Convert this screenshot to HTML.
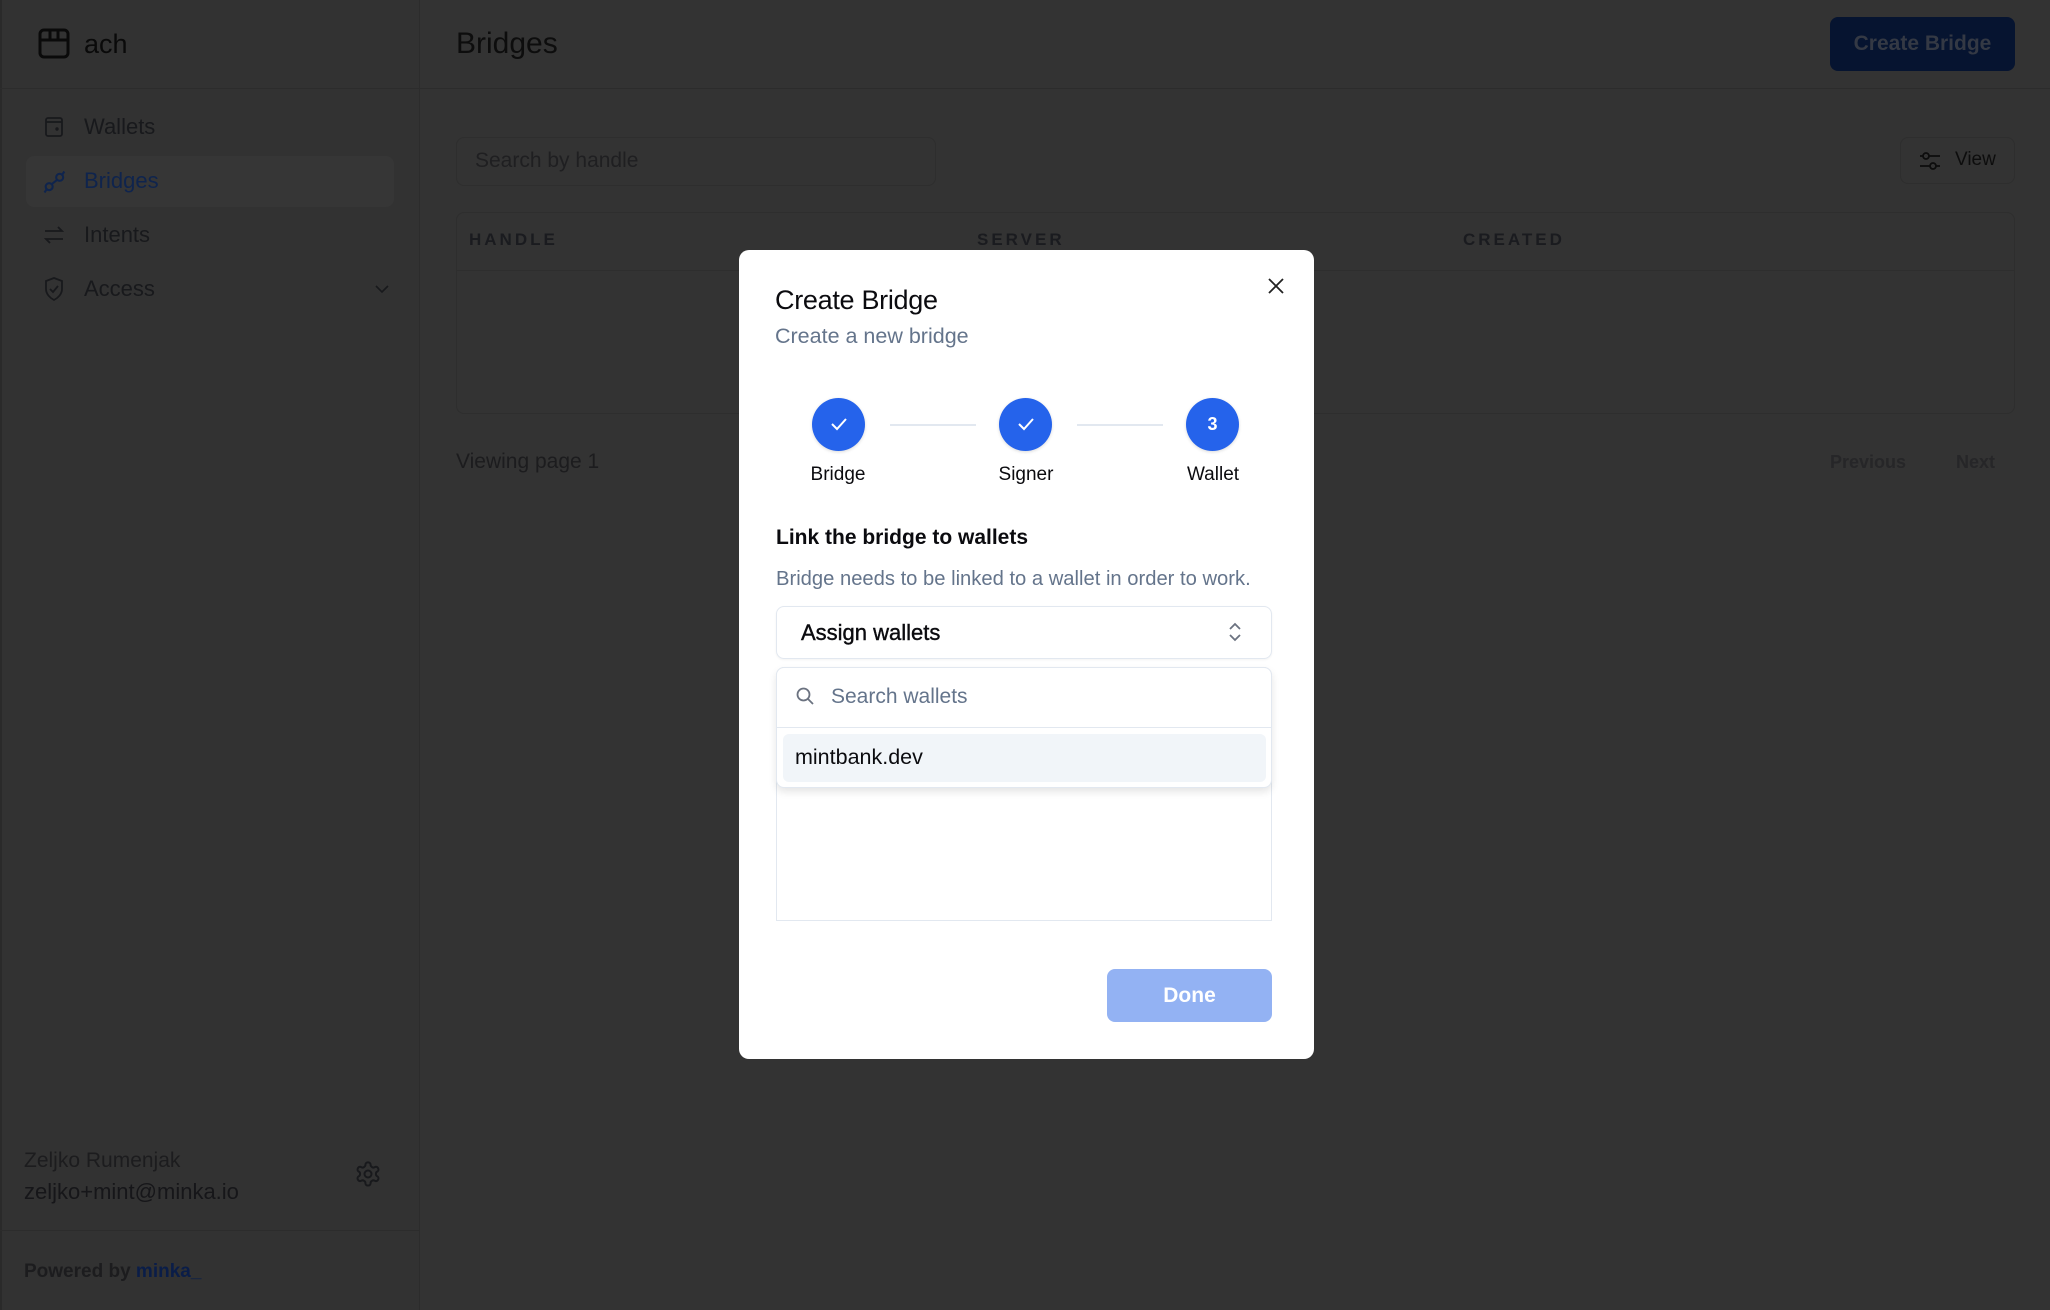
<!DOCTYPE html>
<html><head><meta charset="utf-8"><style>
*{box-sizing:border-box;margin:0;padding:0}
body{width:2050px;height:1310px;background:#333333;font-family:"Liberation Sans",sans-serif;position:relative;overflow:hidden;color:#1c1c1e}
.abs{position:absolute}
.sidebar{left:0;top:0;width:420px;height:1310px;background:#323232;border-right:1px solid #2c2c2c;border-left:2px solid #2a2a2a}
.hline{height:1px;background:#2c2c2c}
.nav{left:42px;font-size:22px;color:#18191c}
.t{white-space:nowrap}
</style></head><body>
<div class="abs sidebar"></div>
<div class="abs hline" style="left:0;top:88px;width:2050px"></div>
<div class="abs hline" style="left:0;top:1230px;width:420px"></div>
<svg class="abs" style="left:38px;top:27px" width="32" height="32" viewBox="0 0 32 32" fill="none" stroke="#0a0a0a" stroke-width="3"><rect x="2" y="3" width="28" height="27" rx="4"/><path d="M2 13h28M12 3v10M20 3v10"/></svg>
<div class="abs t" style="left:84px;top:29px;font-size:27px;color:#0a0a0a">ach</div>
<div class="abs t" style="left:456px;top:27px;font-size:30px;color:#0d0d0d">Bridges</div>
<div class="abs" style="left:1830px;top:17px;width:185px;height:54px;background:#061430;border-radius:8px;color:#343944;font-size:21px;font-weight:bold;text-align:center;line-height:54px">Create Bridge</div>
<div class="abs" style="left:26px;top:156px;width:368px;height:51px;background:#363636;border-radius:8px"></div>
<svg class="abs" style="left:43px;top:116px" width="22" height="22" viewBox="0 0 22 22" fill="none" stroke="#18191c" stroke-width="1.8"><rect x="3" y="2" width="16" height="18" rx="2"/><path d="M3 6h16"/><circle cx="14" cy="13" r="0.8"/></svg>
<div class="abs t nav" style="left:84px;top:114px">Wallets</div>
<svg class="abs" style="left:41px;top:168px" width="28" height="28" viewBox="0 0 24 24" fill="none" stroke="#0f244d" stroke-width="1.8"><circle cx="7" cy="16" r="3"/><circle cx="16" cy="8" r="3"/><path d="M3 21l2-3M20 3l-2 3M9 14l5-4"/></svg>
<div class="abs t nav" style="left:84px;top:168px;color:#0f244d">Bridges</div>
<svg class="abs" style="left:42px;top:223px" width="24" height="24" viewBox="0 0 24 24" fill="none" stroke="#18191c" stroke-width="1.8"><path d="M3 8h17l-4-4M21 16H4l4 4"/></svg>
<div class="abs t nav" style="left:84px;top:222px">Intents</div>
<svg class="abs" style="left:43px;top:276px" width="22" height="26" viewBox="0 0 22 26" fill="none" stroke="#18191c" stroke-width="1.8"><path d="M11 2l8 3v8c0 5-4 9-8 11C7 22 3 18 3 13V5z"/><path d="M7 13l3 3 5-6"/></svg>
<div class="abs t nav" style="left:84px;top:276px">Access</div>
<svg class="abs" style="left:374px;top:283px" width="16" height="12" viewBox="0 0 16 12" fill="none" stroke="#18191c" stroke-width="1.6"><path d="M2 3l6 6 6-6"/></svg>
<div class="abs t" style="left:24px;top:1149px;font-size:21px;color:#1c1c1e">Zeljko Rumenjak</div>
<div class="abs t" style="left:24px;top:1179px;font-size:22px;color:#161619">zeljko+mint@minka.io</div>
<svg class="abs" style="left:354px;top:1160px" width="28" height="28" viewBox="0 0 24 24" fill="none" stroke="#18191c" stroke-width="1.7"><path d="M12.2 2h-.4a2 2 0 0 0-2 2v.2a2 2 0 0 1-1 1.7l-.4.3a2 2 0 0 1-2 0l-.2-.1a2 2 0 0 0-2.7.7l-.2.4a2 2 0 0 0 .7 2.7l.2.1a2 2 0 0 1 1 1.7v.5a2 2 0 0 1-1 1.7l-.2.1a2 2 0 0 0-.7 2.7l.2.4a2 2 0 0 0 2.7.7l.2-.1a2 2 0 0 1 2 0l.4.3a2 2 0 0 1 1 1.7v.2a2 2 0 0 0 2 2h.4a2 2 0 0 0 2-2v-.2a2 2 0 0 1 1-1.7l.4-.3a2 2 0 0 1 2 0l.2.1a2 2 0 0 0 2.7-.7l.2-.4a2 2 0 0 0-.7-2.7l-.2-.1a2 2 0 0 1-1-1.7v-.5a2 2 0 0 1 1-1.7l.2-.1a2 2 0 0 0 .7-2.7l-.2-.4a2 2 0 0 0-2.7-.7l-.2.1a2 2 0 0 1-2 0l-.4-.3a2 2 0 0 1-1-1.7V4a2 2 0 0 0-2-2z"/><circle cx="12" cy="12" r="3"/></svg>
<div class="abs t" style="left:24px;top:1261px;font-size:19px;color:#1c1c1e;font-weight:bold">Powered by <span style="color:#0a1d48">minka_</span></div>
<div class="abs" style="left:456px;top:137px;width:480px;height:49px;border:1px solid #2e2e2e;border-radius:8px;background:#333"></div>
<div class="abs t" style="left:475px;top:149px;font-size:21px;color:#1f1f21">Search by handle</div>
<div class="abs" style="left:1900px;top:137px;width:115px;height:47px;border:1px solid #2e2e2e;border-radius:8px"></div>
<svg class="abs" style="left:1919px;top:151px" width="22" height="20" viewBox="0 0 22 20" fill="none" stroke="#0d0d0d" stroke-width="1.8"><path d="M1 5h20M1 15h20"/><circle cx="7" cy="5" r="3" fill="#333"/><circle cx="14" cy="15" r="3" fill="#333"/></svg>
<div class="abs t" style="left:1955px;top:149px;font-size:19px;color:#0d0d0d">View</div>
<div class="abs" style="left:456px;top:212px;width:1559px;height:202px;border:1px solid #2e2e2e;border-radius:8px"></div>
<div class="abs hline" style="left:457px;top:270px;width:1557px;background:#2e2e2e"></div>
<div class="abs t" style="left:469px;top:230px;font-size:17px;letter-spacing:3px;font-weight:bold;color:#1a1b1f">HANDLE</div>
<div class="abs t" style="left:977px;top:230px;font-size:17px;letter-spacing:3px;font-weight:bold;color:#1a1b1f">SERVER</div>
<div class="abs t" style="left:1463px;top:230px;font-size:17px;letter-spacing:3px;font-weight:bold;color:#1a1b1f">CREATED</div>
<div class="abs t" style="left:456px;top:450px;font-size:21px;color:#1c1c1e">Viewing page 1</div>
<div class="abs t" style="left:1830px;top:452px;font-size:18px;color:#262628;font-weight:bold">Previous</div>
<div class="abs t" style="left:1956px;top:452px;font-size:18px;color:#262628;font-weight:bold">Next</div>
<div class="abs" style="left:739px;top:250px;width:575px;height:809px;background:#fff;border-radius:10px"></div>
<svg class="abs" style="left:1267px;top:277px" width="18" height="18" viewBox="0 0 18 18" stroke="#222" stroke-width="1.8"><path d="M2 2l14 14M16 2L2 16"/></svg>
<div class="abs t" style="left:775px;top:285px;font-size:27px;color:#0b0b0f;letter-spacing:-0.3px">Create Bridge</div>
<div class="abs t" style="left:775px;top:324px;font-size:21.5px;color:#64748b">Create a new bridge</div>
<div class="abs" style="left:890px;top:424px;width:86px;height:2px;background:#e2e8f0"></div>
<div class="abs" style="left:1077px;top:424px;width:86px;height:2px;background:#e2e8f0"></div>
<div class="abs" style="left:812px;top:398px;width:53px;height:53px;border-radius:50%;background:#2563eb;box-shadow:0 1px 3px rgba(0,0,0,.15)"></div>
<div class="abs" style="left:999px;top:398px;width:53px;height:53px;border-radius:50%;background:#2563eb;box-shadow:0 1px 3px rgba(0,0,0,.15)"></div>
<div class="abs" style="left:1186px;top:398px;width:53px;height:53px;border-radius:50%;background:#2563eb;box-shadow:0 1px 3px rgba(0,0,0,.15);color:#fff;font-size:18px;font-weight:bold;text-align:center;line-height:53px">3</div>
<svg class="abs" style="left:829px;top:415px" width="20" height="18" viewBox="0 0 20 18" fill="none" stroke="#fff" stroke-width="2"><path d="M3 9l5 5 9-10"/></svg>
<svg class="abs" style="left:1016px;top:415px" width="20" height="18" viewBox="0 0 20 18" fill="none" stroke="#fff" stroke-width="2"><path d="M3 9l5 5 9-10"/></svg>
<div class="abs t" style="left:788px;top:464px;width:100px;text-align:center;font-size:19px;color:#0b0b0f">Bridge</div>
<div class="abs t" style="left:976px;top:464px;width:100px;text-align:center;font-size:19px;color:#0b0b0f">Signer</div>
<div class="abs t" style="left:1163px;top:464px;width:100px;text-align:center;font-size:19px;color:#0b0b0f">Wallet</div>
<div class="abs t" style="left:776px;top:526px;font-size:21px;font-weight:bold;color:#0b0b0f">Link the bridge to wallets</div>
<div class="abs t" style="left:776px;top:568px;font-size:20.2px;color:#64748b">Bridge needs to be linked to a wallet in order to work.</div>
<div class="abs" style="left:776px;top:606px;width:496px;height:53px;border:1px solid #e2e8f0;border-radius:8px;box-shadow:0 1px 2px rgba(0,0,0,.05)"></div>
<div class="abs t" style="left:801px;top:620px;font-size:22px;color:#0b0b0f;-webkit-text-stroke:0.4px #0b0b0f">Assign wallets</div>
<svg class="abs" style="left:1227px;top:621px" width="16" height="22" viewBox="0 0 16 22" fill="none" stroke="#6b7280" stroke-width="1.8"><path d="M3 8l5-5 5 5M3 14l5 5 5-5"/></svg>
<div class="abs" style="left:776px;top:667px;width:496px;height:254px;border:1px solid #e2e8f0;border-radius:8px 8px 0 0"></div>
<div class="abs" style="left:776px;top:667px;width:496px;height:121px;border:1px solid #e2e8f0;border-radius:8px;background:#fff;box-shadow:0 4px 8px rgba(0,0,0,.1)"></div>
<div class="abs hline" style="left:777px;top:727px;width:494px;background:#e2e8f0"></div>
<svg class="abs" style="left:795px;top:686px" width="20" height="20" viewBox="0 0 20 20" fill="none" stroke="#6b7280" stroke-width="1.8"><circle cx="8.5" cy="8.5" r="6"/><path d="M13 13l5 5"/></svg>
<div class="abs t" style="left:831px;top:685px;font-size:21px;color:#64748b">Search wallets</div>
<div class="abs" style="left:783px;top:734px;width:483px;height:48px;background:#f1f5f9;border-radius:6px"></div>
<div class="abs t" style="left:795px;top:745px;font-size:21.5px;color:#0b0b0f">mintbank.dev</div>
<div class="abs" style="left:1107px;top:969px;width:165px;height:53px;background:#93b2f3;border-radius:8px;color:#fff;font-size:21px;font-weight:bold;text-align:center;line-height:53px">Done</div>
</body></html>
